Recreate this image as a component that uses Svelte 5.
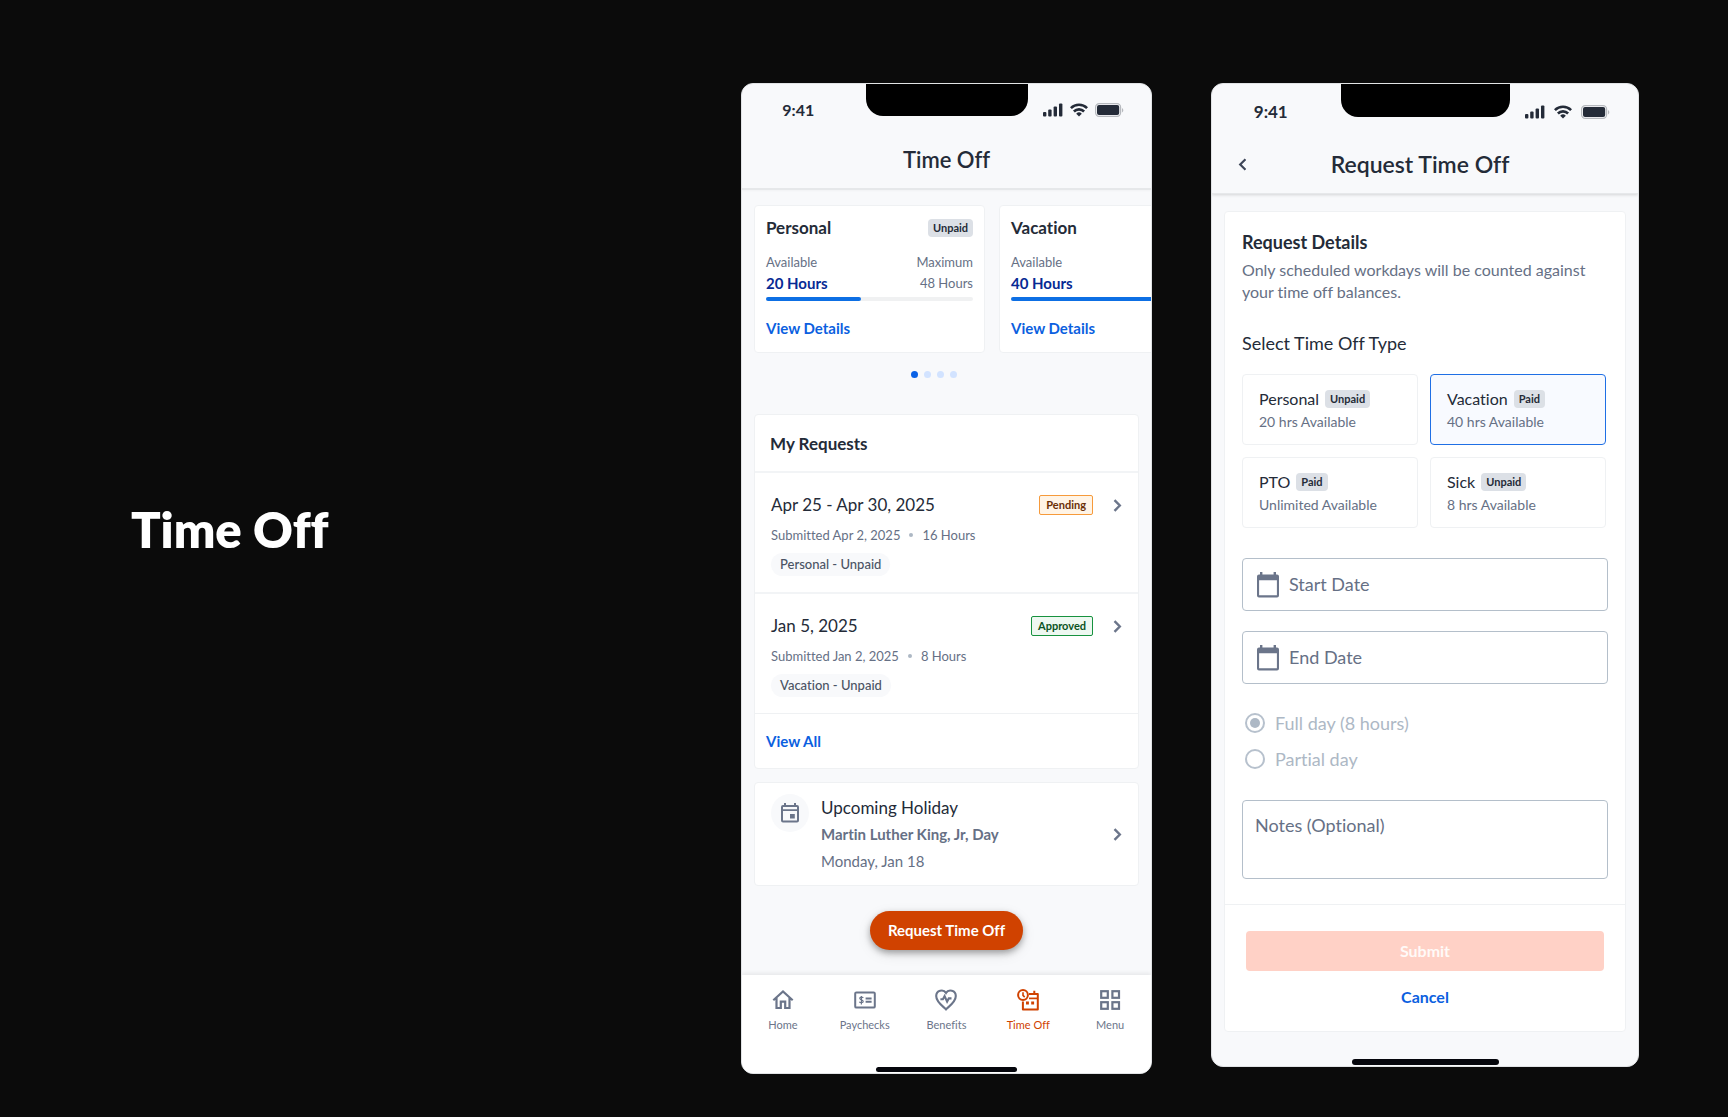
<script>
  const balances = [
    { name: 'Personal', badge: 'Unpaid', available: '20 Hours', maximum: '48 Hours', used: 46 },
    { name: 'Vacation', available: '40 Hours', used: 100 }
  ];
  const requests = [
    { dates: 'Apr 25 - Apr 30, 2025', submitted: 'Submitted Apr 2, 2025', hours: '16 Hours', type: 'Personal - Unpaid', status: 'Pending' },
    { dates: 'Jan 5, 2025', submitted: 'Submitted Jan 2, 2025', hours: '8 Hours', type: 'Vacation - Unpaid', status: 'Approved' }
  ];
  const types = [
    { name: 'Personal', badge: 'Unpaid', note: '20 hrs Available' },
    { name: 'Vacation', badge: 'Paid', note: '40 hrs Available' },
    { name: 'PTO', badge: 'Paid', note: 'Unlimited Available' },
    { name: 'Sick', badge: 'Unpaid', note: '8 hrs Available' }
  ];
  const tabs = ['Home', 'Paychecks', 'Benefits', 'Time Off', 'Menu'];
  let selected = $state('Vacation');
  let page = $state(0);
</script>

{#snippet statusBar()}
  <div class="status">
    <span class="clock">9:41</span>
    <span class="notch"></span>
    <span class="signals">
      <svg width="20" height="14" viewBox="0 0 20 14" fill="#242b38">
        <rect x="0" y="9" width="3.4" height="4.4" rx="1" /><rect x="5.2" y="6.6" width="3.4" height="6.8" rx="1" />
        <rect x="10.6" y="3.6" width="3.4" height="9.8" rx="1" /><rect x="16" y=".6" width="3.4" height="12.8" rx="1" />
      </svg>
      <svg width="18" height="14" viewBox="0 0 18 14" fill="none" stroke="#242b38" stroke-width="2.6">
        <path d="M.9 5.2a11.4 11.4 0 0 1 16.2 0" /><path d="M3.9 8.5a7.2 7.2 0 0 1 10.2 0" />
        <path d="M9 13.4 6.2 10.7a4 4 0 0 1 5.6 0Z" fill="#242b38" stroke="none" />
      </svg>
      <svg width="29" height="14" viewBox="0 0 29 14">
        <rect x=".6" y=".6" width="25" height="12.8" rx="3.6" fill="none" stroke="#b6b9be" stroke-width="1.2" />
        <rect x="2" y="2" width="22.2" height="10" rx="2" fill="#242b38" />
        <path d="M27 5v4.4c1.8-.7 1.8-3.7 0-4.4Z" fill="#b6b9be" />
      </svg>
    </span>
  </div>
{/snippet}

{#snippet chevron()}
  <svg width="9" height="13" viewBox="0 0 9 13" fill="none" stroke="#6b758a" stroke-width="2.4"><path d="m1.5 1.2 5.3 5.3-5.3 5.3" /></svg>
{/snippet}

{#snippet tabIcon(name)}
  {#if name === 'Home'}
    <svg width="22" height="22" viewBox="0 0 22 22" fill="none" stroke="currentColor" stroke-width="2.2"><path d="M1.3 11.2 11 2.5l9.700 8.700M4.500 9v10h4.300v-6.400h4.400V19h4.300V9" /></svg>
  {:else if name === 'Paychecks'}
    <svg width="22" height="22" viewBox="0 0 22 22" fill="none" stroke="currentColor" stroke-width="2">
      <rect x="1.2" y="3.4" width="19.6" height="15.2" rx="1.2" />
      <path d="M11.6 9.4h6M11.6 12.700h6" />
      <path d="M9.200 9.100C8.600 7.700 5.600 7.900 5.800 9.500c.2 1.500 3.400 1.300 3.400 3 0 1.600-3.200 1.700-3.800.2M7.400 7v8.500" stroke-width="1.2" />
    </svg>
  {:else if name === 'Benefits'}
    <svg width="22" height="22" viewBox="0 0 22 22" fill="none" stroke="currentColor" stroke-width="2.1">
      <path d="M11 20.400C8.800 17.800 1.200 13.300 1.200 7c0-5.800 7.200-7.300 9.800-3.100C13.600-.3 20.800 1.200 20.800 7c0 6.300-7.600 10.800-9.800 13.400Z" />
      <path d="M5.400 10.300h2.500l1.700-3.200 2.500 5.500 1.700-3.200h2.700" />
    </svg>
  {:else if name === 'Time Off'}
    <svg width="22" height="22" viewBox="0 0 22 22" fill="none" stroke="currentColor" stroke-width="2">
      <path d="M12 5h8.800v15.400H5.900V12.500M17.300 1.800v3" stroke-linejoin="round" />
      <path d="M12 9.400h9" stroke-width="1.7" />
      <circle cx="6" cy="6" r="4.9" /><path d="M6 3.200v3.200l1.700 1.700" stroke-width="1.6" />
      <path d="M9 14h2.900M14.200 14h2.900" stroke-width="2.9" />
    </svg>
  {:else}
    <svg width="22" height="22" viewBox="0 0 22 22" fill="none" stroke="currentColor" stroke-width="2.2">
      <rect x="2.2" y="2.2" width="6.6" height="6.6" /><rect x="13.4" y="2.2" width="6.6" height="6.6" />
      <rect x="2.2" y="13.2" width="6.6" height="6.6" /><rect x="13.4" y="13.2" width="6.6" height="6.6" />
    </svg>
  {/if}
{/snippet}

{#snippet dateIcon()}
  <svg width="22" height="26" viewBox="0 0 22 26"><path fill="#6b758a" fill-rule="evenodd" d="M3 0h2.400v2.400h11.200V0H19v2.400h1A2 2 0 0 1 22 4.400V23.400a2 2 0 0 1-2 2H2a2 2 0 0 1-2-2V4.400a2 2 0 0 1 2-2h1ZM2.100 8.200v15h17.800v-15Z" /></svg>
{/snippet}

<main>
  <h1>Time Off</h1>

  <section class="phone" aria-label="Time Off overview">
    <header class="top">
      {@render statusBar()}
      <div class="titlebar"><h2>Time Off</h2></div>
    </header>

    <div class="carousel">
      {#each balances as b}
        <article class="card balance">
          <div class="split name"><h3>{b.name}</h3>{#if b.badge}<span class="badge">{b.badge}</span>{/if}</div>
          <div class="split small"><span>Available</span>{#if b.maximum}<span>Maximum</span>{/if}</div>
          <div class="split small"><strong>{b.available}</strong>{#if b.maximum}<span>{b.maximum}</span>{/if}</div>
          <div class="bar"><div class="fill" style="width: {b.used}%"></div></div>
          <a class="link" href="#details">View Details</a>
        </article>
      {/each}
    </div>

    <div class="dots">
      {#each [0, 1, 2, 3] as i}
        <button class:on={page === i} aria-label="Page {i + 1}" onclick={() => (page = i)}></button>
      {/each}
    </div>

    <section class="card requests">
      <h3>My Requests</h3>
      {#each requests as r}
        <article class="request">
          <div class="split main-line">
            <h4>{r.dates}</h4>
            <span class="tail"><span class="state {r.status.toLowerCase()}">{r.status}</span>{@render chevron()}</span>
          </div>
          <p class="meta"><span>{r.submitted}</span><i></i><span>{r.hours}</span></p>
          <span class="pill">{r.type}</span>
        </article>
      {/each}
      <div class="view-all"><a class="link" href="#all">View All</a></div>
    </section>

    <article class="card holiday">
      <span class="round">
        <svg width="18" height="20" viewBox="0 0 18 20"><path fill="#6b758a" fill-rule="evenodd" d="M3 0h2v2h8V0h2v2h1a2 2 0 0 1 2 2v13.500a2 2 0 0 1-2 2H2a2 2 0 0 1-2-2V4a2 2 0 0 1 2-2h1ZM2 4v2.200h14V4ZM2 8v9.500h14V8ZM9 11h4.800v4.600H9Z" /></svg>
      </span>
      <div class="holiday-text">
        <h3>Upcoming Holiday</h3>
        <p><b>Martin Luther King, Jr, Day</b></p>
        <p>Monday, Jan 18</p>
      </div>
      {@render chevron()}
    </article>

    <button class="cta">Request Time Off</button>

    <nav>
      {#each tabs as tab}
        <a href="#{tab.replace(' ', '-').toLowerCase()}" class:current={tab === 'Time Off'}>{@render tabIcon(tab)}<span>{tab}</span></a>
      {/each}
    </nav>
    <div class="home-bar white"><span></span></div>
  </section>

  <section class="phone large" aria-label="Request Time Off">
    <header class="top">
      {@render statusBar()}
      <div class="titlebar">
        <button class="back" aria-label="Back"><svg width="9" height="13" viewBox="0 0 9 13" fill="none" stroke="#3f4759" stroke-width="2.2"><path d="M7.5 1.2 2.2 6.5l5.300 5.300" /></svg></button>
        <h2>Request Time Off</h2>
        <span></span>
      </div>
    </header>

    <form class="card form">
      <div class="fields">
        <h3>Request Details</h3>
        <p class="hint">Only scheduled workdays will be counted against your time off balances.</p>
        <h4>Select Time Off Type</h4>
        <div class="types">
          {#each types as t}
            <button type="button" class="type" class:selected={selected === t.name} aria-pressed={selected === t.name} onclick={() => (selected = t.name)}>
              <span class="type-name">{t.name} <span class="badge">{t.badge}</span></span>
              <span class="type-note">{t.note}</span>
            </button>
          {/each}
        </div>
        <label class="date">{@render dateIcon()}<input type="text" placeholder="Start Date" aria-label="Start Date" /></label>
        <label class="date">{@render dateIcon()}<input type="text" placeholder="End Date" aria-label="End Date" /></label>
        <div class="radios">
          <label><input type="radio" name="length" checked disabled />Full day (8 hours)</label>
          <label><input type="radio" name="length" disabled />Partial day</label>
        </div>
        <textarea placeholder="Notes (Optional)" aria-label="Notes (Optional)"></textarea>
      </div>
      <div class="actions">
        <button type="submit" class="submit" disabled>Submit</button>
        <button type="button" class="cancel">Cancel</button>
      </div>
    </form>
    <div class="home-bar"><span></span></div>
  </section>
</main>

<style>
  :global(body) { background: #0b0b0b; }
  main {
    display: grid;
    grid-template-columns: 551fr 411fr 428fr;
    column-gap: 59px;
    align-items: start;
    box-sizing: border-box;
    min-height: 100vh;
    padding: 83px 89px 40px 131px;
    font-family: Lato, "Open Sans", sans-serif;
    font-variant-ligatures: none;
    color: #242b38;
  }
  main *, main *::before { box-sizing: border-box; }
  h1, h2, h3, h4, p { margin: 0; font-weight: 400; }
  button, input, textarea { font: inherit; color: inherit; margin: 0; }
  button { border: 0; padding: 0; background: none; cursor: pointer; }
  svg { display: block; flex: none; }
  h1 { padding-top: 416px; font-size: 49px; line-height: 60px; font-weight: 800; color: #fff; }

  .phone {
    display: flex;
    flex-direction: column;
    min-width: 0;
    overflow: hidden;
    background: #f8f9fb;
    border: 1px solid #e1e3e5;
    border-radius: 12px;
  }
  .top { border-bottom: 2px solid #e6e8ea; box-shadow: 0 1px 2px #00000008; }
  .status { display: grid; grid-template-columns: 1fr 162px 1fr; height: 52px; align-items: center; }
  .clock { justify-self: center; margin-right: 11px; font-size: 16px; line-height: 20px; font-weight: 700; }
  .notch { align-self: start; height: 32px; background: #000; border-radius: 0 0 17px 17px; }
  .signals { display: flex; justify-self: end; gap: 7px; margin-right: 27px; }
  .titlebar { display: grid; place-items: center; height: 52px; padding-bottom: 4px; }
  h2 { font-size: 22px; line-height: 28px; font-weight: 600; }

  .card { background: #fff; border: 1px solid #eff1f3; border-radius: 4px; }
  .carousel { display: flex; gap: 14px; margin: 15px 0 0 12px; overflow: hidden; }
  .balance { flex: none; width: 231px; height: 148px; padding: 8px 11px 6px; }
  .split { display: flex; align-items: center; justify-content: space-between; }
  .name { height: 28px; }
  .name h3 { font-size: 17px; line-height: 24px; font-weight: 700; }
  .badge { padding: 0 5px; border-radius: 4px; background: #dce0e6; font-size: 11px; line-height: 18px; font-weight: 700; }
  .small { height: 21px; font-size: 13px; color: #667085; }
  .name + .small { margin-top: 9px; }
  .small strong { font-size: 15px; font-weight: 700; color: #072a94; }
  .bar { height: 4px; margin-top: 4px; border-radius: 2px; background: #f0f1f2; }
  .fill { height: 100%; border-radius: 2px; background: #0d6fe4; }
  .link { display: inline-block; color: #0b5fe0; font-size: 15px; line-height: 20px; font-weight: 700; text-decoration: none; }
  .balance .link { margin-top: 17px; }

  .dots { display: flex; gap: 6px; justify-content: center; margin: 18px 26px 36px 0; }
  .dots button { width: 7px; height: 7px; border-radius: 50%; background: #d2e3ff; }
  .dots .on { background: #0b62e6; }

  .requests, .holiday { margin: 0 12px; }
  .requests h3 { padding: 17px 15px 15px; font-size: 17px; line-height: 24px; font-weight: 700; }
  .request { height: 121px; padding: 20px 16px 15px; border-top: 2px solid #f2f4f6; }
  .main-line { height: 24px; }
  h4 { font-size: 17px; line-height: 24px; }
  .tail { display: flex; align-items: center; gap: 20px; }
  .state { padding: 0 6px; border: 1px solid; border-radius: 2px; font-size: 11px; line-height: 18px; font-weight: 700; }
  .pending { color: #6b2f06; background: #fff4e6; border-color: #f69a3b; }
  .approved { color: #0b5323; background: #eef8f1; border-color: #17923f; }
  .meta { display: flex; align-items: center; gap: 9px; height: 20px; margin-top: 8px; font-size: 13px; color: #667085; }
  .meta i { width: 4px; height: 4px; border-radius: 50%; background: #adb8c4; }
  .pill { display: inline-block; margin-top: 8px; padding: 0 9px; border-radius: 12px; background: #f8f9fb; font-size: 13px; line-height: 23px; color: #4b5364; font-weight: 500; }
  .view-all { padding: 17px 11px; border-top: 1px solid #eff1f3; }
  .view-all .link { display: block; }

  .holiday { display: flex; gap: 12px; margin-top: 13px; padding: 11px 16px 10px; }
  .holiday > :global(svg) { align-self: center; }
  .round { display: grid; place-items: center; flex: none; width: 38px; height: 38px; border-radius: 50%; background: #f8f9fb; }
  .holiday-text { flex: 1; font-size: 15px; line-height: 27px; color: #667085; }
  .holiday-text h3 { font-size: 17px; line-height: 27px; color: #242b38; }
  b { font-weight: 700; }

  .cta {
    align-self: center;
    height: 39px;
    margin: 25px 0;
    padding: 0 18px 1px;
    border-radius: 20px;
    background: #d04200;
    box-shadow: 0 3px 6px #00000050, 0 4px 14px #0000001a;
    color: #fff;
    font-size: 15px;
    font-weight: 700;
  }
  nav { display: grid; grid-template-columns: repeat(5, 1fr); height: 92px; padding-top: 14px; background: #fff; box-shadow: 0 -2px 4px #00000012; }
  nav a { display: flex; flex-direction: column; align-items: center; gap: 6px; color: #6b758a; font-size: 11px; line-height: 16px; text-decoration: none; }
  nav .current { color: #d04200; }
  .home-bar { display: grid; justify-items: center; padding-bottom: 1px; }
  .home-bar span { width: 141px; height: 5px; border-radius: 3px; background: #05060c; }
  .white { background: #fff; }

  .large .status { grid-template-columns: 1fr 169px 1fr; height: 55px; }
  .large .clock { font-size: 17px; }
  .large .notch { height: 33px; }
  .large .signals { gap: 9px; margin-right: 28px; }
  .large .titlebar { grid-template-columns: 24px 1fr 34px; height: 54px; padding: 0 18px 4px; }
  .large h2 { font-size: 23px; }
  .large .top { border-bottom-width: 1px; box-shadow: 0 1px 3px #00000026; }
  .back { display: grid; place-items: center; width: 24px; height: 32px; }

  .form { margin: 17px 12px 27px; }
  .fields { display: flex; flex-direction: column; padding: 18px 17px 25px; }
  .fields h3 { font-size: 18px; line-height: 24px; font-weight: 700; }
  .hint { margin: 5px 0 28px; font-size: 16px; line-height: 22px; color: #667085; }
  .fields h4 { font-size: 18px; }
  .types { display: grid; grid-template-columns: 1fr 1fr; gap: 12px; margin: 19px 2px 30px 0; }
  .type { display: flex; flex-direction: column; gap: 2px; padding: 12px 16px; height: 71px; border: 1px solid #eff1f3; border-radius: 4px; background: #fff; text-align: left; }
  .selected { border-color: #1f6fe5; background: #f8faff; }
  .type-name { display: flex; align-items: center; gap: 6px; font-size: 16px; line-height: 23px; }
  .type-note { font-size: 14px; line-height: 20px; color: #667085; }
  .date { display: flex; align-items: center; gap: 10px; height: 53px; margin-bottom: 20px; padding: 0 14px; border: 1px solid #b4bfca; border-radius: 4px; }
  .date input { flex: 1; min-width: 0; padding: 0 0 2px; border: 0; outline: 0; background: none; font-size: 18px; line-height: 24px; }
  ::placeholder { color: #667085; opacity: 1; }
  .radios { display: grid; gap: 12px; margin: 7px 0 29px 3px; font-size: 18px; line-height: 24px; color: #adb8c5; }
  .radios label { display: flex; align-items: center; gap: 10px; }
  .radios input { appearance: none; display: grid; place-items: center; width: 20px; height: 20px; border: 2px solid #b7c1cd; border-radius: 50%; }
  .radios input:checked::before { content: ""; width: 10px; height: 10px; border-radius: 50%; background: #adb8c5; }
  textarea { height: 79px; padding: 12px; border: 1px solid #b4bfca; border-radius: 4px; background: #fff; resize: none; font-size: 18px; line-height: 24px; }
  .actions { display: grid; gap: 13px; padding: 26px 21px 23px; border-top: 1px solid #eff1f3; }
  .submit { height: 40px; padding-bottom: 2px; border-radius: 4px; background: #ffd1c6; color: #fffaf8; font-size: 16px; font-weight: 700; }
  .cancel { justify-self: center; height: 24px; color: #0b5fe0; font-size: 16px; font-weight: 700; }
  .large .home-bar span { width: 147px; height: 6px; }
</style>
